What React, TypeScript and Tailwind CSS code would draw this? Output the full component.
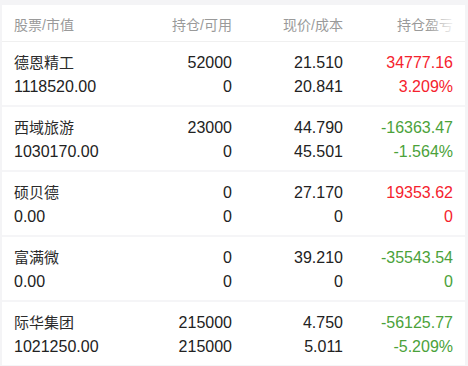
type Row = {
  name: string;
  value: string;
  hold: string;
  avail: string;
  price: string;
  cost: string;
  pnl: string;
  pct: string;
  up: boolean;
};

const rows: Row[] = [
  { name: "德恩精工", value: "1118520.00", hold: "52000", avail: "0", price: "21.510", cost: "20.841", pnl: "34777.16", pct: "3.209%", up: true },
  { name: "西域旅游", value: "1030170.00", hold: "23000", avail: "0", price: "44.790", cost: "45.501", pnl: "-16363.47", pct: "-1.564%", up: false },
  { name: "硕贝德", value: "0.00", hold: "0", avail: "0", price: "27.170", cost: "0", pnl: "19353.62", pct: "0", up: true },
  { name: "富满微", value: "0.00", hold: "0", avail: "0", price: "39.210", cost: "0", pnl: "-35543.54", pct: "0", up: false },
  { name: "际华集团", value: "1021250.00", hold: "215000", avail: "215000", price: "4.750", cost: "5.011", pnl: "-56125.77", pct: "-5.209%", up: false },
];

const font = { fontFamily: '"Liberation Sans", "Noto Sans CJK SC", sans-serif' };

const App = () => {
  return (
    <div className="w-[468px] h-[366px] overflow-hidden bg-[#f4f4f6] pt-[5px] pl-[2px] pr-[3px]" style={font}>
      <div className="bg-white h-full">
        {/* 表头 */}
        <div className="relative grid grid-cols-[108px_110px_111px_110px] px-3 h-[37px] items-center pt-[4px] text-[14px] text-[#9a9a9a] border-b border-[#f0f0f0]">
          <div>股票/市值</div>
          <div className="text-right">持仓/可用</div>
          <div className="text-right">现价/成本</div>
          <div className="text-right">持仓盈亏</div>
          <div className="absolute right-[8px] top-0 h-full w-[30px] bg-gradient-to-r from-white/0 to-white" />
        </div>

        {rows.map((r) => (
          <div
            key={r.name}
            className="grid grid-cols-[108px_110px_111px_110px] px-3 pt-[9px] pb-[6px] border-b-[2px] border-[#f5f5f7]"
          >
            <div className="text-[15px] leading-6 text-[#2b2b2b]">{r.name}</div>
            <div className="text-right text-[16px] leading-6 text-[#222]">{r.hold}</div>
            <div className="text-right text-[16px] leading-6 text-[#222]">{r.price}</div>
            <div className={`text-right text-[16px] leading-6 ${r.up ? "text-[#f5222d]" : "text-[#4ba23a]"}`}>{r.pnl}</div>
            <div className="text-[16px] leading-6 text-[#222]">{r.value}</div>
            <div className="text-right text-[16px] leading-6 text-[#222]">{r.avail}</div>
            <div className="text-right text-[16px] leading-6 text-[#222]">{r.cost}</div>
            <div className={`text-right text-[16px] leading-6 ${r.up ? "text-[#f5222d]" : "text-[#4ba23a]"}`}>{r.pct}</div>
          </div>
        ))}
      </div>
    </div>
  );
};

export default App;
